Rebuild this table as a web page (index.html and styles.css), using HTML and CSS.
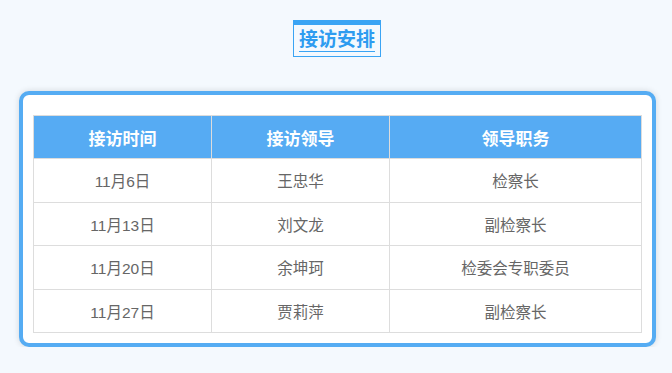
FILE: index.html
```html
<!DOCTYPE html>
<html lang="zh">
<head>
<meta charset="utf-8">
<link rel="stylesheet" href="styles.css">
</head>
<body>
<div class="page">
  <div class="title-wrap">
    <div class="title"><span class="title-text">接访安排</span></div>
  </div>
  <div class="card">
    <table class="schedule">
      <colgroup>
        <col class="c1"><col class="c2"><col class="c3">
      </colgroup>
      <thead>
        <tr><th>接访时间</th><th>接访领导</th><th>领导职务</th></tr>
      </thead>
      <tbody>
        <tr><td>11月6日</td><td>王忠华</td><td>检察长</td></tr>
        <tr><td>11月13日</td><td>刘文龙</td><td>副检察长</td></tr>
        <tr><td>11月20日</td><td>余坤珂</td><td>检委会专职委员</td></tr>
        <tr><td>11月27日</td><td>贾莉萍</td><td>副检察长</td></tr>
      </tbody>
    </table>
  </div>
</div>
</body>
</html>
```

FILE: styles.css
```css
html, body {
  margin: 0;
  padding: 0;
  background: #f4f9fe;
  font-family: "Liberation Sans", "Noto Sans CJK SC", sans-serif;
}
.page {
  padding-top: 20px;
}
.title-wrap {
  text-align: center;
}
.title {
  display: inline-block;
  border: 1px solid #3aa4f4;
  border-top-width: 5px;
  padding: 0 5px 4px;
  margin-left: 2px;
}
.title-text {
  display: block;
  height: 26px;
  line-height: 26px;
  border-bottom: 1px solid #3aa4f4;
  color: #2e9cf0;
  font-family: "Noto Sans CJK SC", sans-serif;
  font-size: 19px;
  font-weight: bold;
}
.card {
  margin: 34px 0 0 19px;
  width: 637px;
  box-sizing: border-box;
  background: #fff;
  border: 4px solid #55acf3;
  border-radius: 10px;
  box-shadow: 0 0 6px rgba(0, 0, 0, 0.14);
  padding: 20px 10px 10px;
}
.schedule {
  width: 100%;
  border-collapse: collapse;
  table-layout: fixed;
}
.c1, .c2 { width: 178px; }
.schedule th, .schedule td {
  border: 1px solid #dddddd;
  text-align: center;
  padding: 0;
}
.schedule th {
  height: 42px;
  background: #56abf3;
  color: #fff;
  font-family: "Noto Sans CJK SC", sans-serif;
  font-size: 17px;
  font-weight: bold;
  border-color: #dcdcdc;
}
.schedule td {
  height: 42.5px;
  color: #666;
  font-size: 15.5px;
}
```
